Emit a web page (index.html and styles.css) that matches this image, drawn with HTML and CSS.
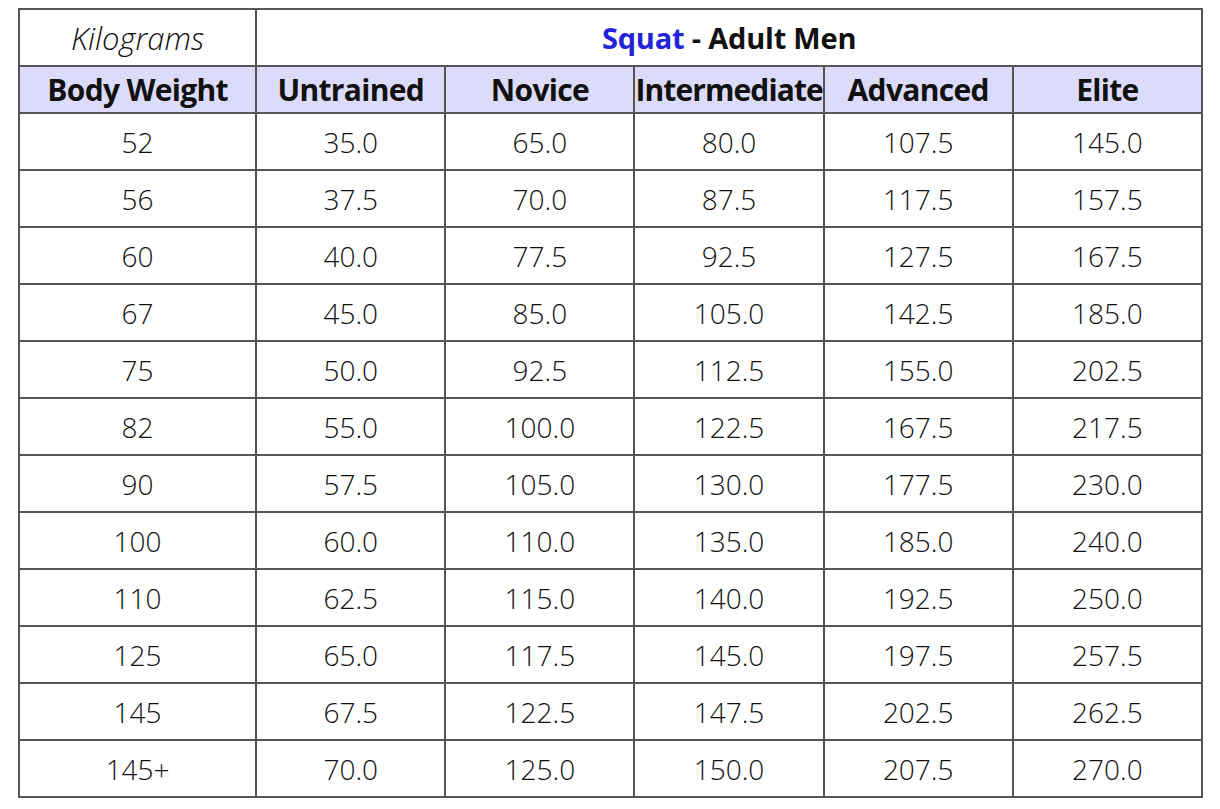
FILE: index.html
```html
<!DOCTYPE html>
<html>
<head>
<meta charset="utf-8">
<link rel="stylesheet" href="styles.css">
</head>
<body>
<div class="page">
<table class="standards">
<colgroup>
<col class="c-first"><col class="c"><col class="c"><col class="c"><col class="c"><col class="c">
</colgroup>
<thead>
<tr class="title-row"><th class="unit">Kilograms</th><th class="title" colspan="5"><span class="lift">Squat</span> - Adult Men</th></tr>
<tr class="head-row"><th>Body Weight</th><th>Untrained</th><th>Novice</th><th class="tight">Intermediate</th><th>Advanced</th><th>Elite</th></tr>
</thead>
<tbody>
<tr><td>52</td><td>35.0</td><td>65.0</td><td>80.0</td><td>107.5</td><td>145.0</td></tr>
<tr><td>56</td><td>37.5</td><td>70.0</td><td>87.5</td><td>117.5</td><td>157.5</td></tr>
<tr><td>60</td><td>40.0</td><td>77.5</td><td>92.5</td><td>127.5</td><td>167.5</td></tr>
<tr><td>67</td><td>45.0</td><td>85.0</td><td>105.0</td><td>142.5</td><td>185.0</td></tr>
<tr><td>75</td><td>50.0</td><td>92.5</td><td>112.5</td><td>155.0</td><td>202.5</td></tr>
<tr><td>82</td><td>55.0</td><td>100.0</td><td>122.5</td><td>167.5</td><td>217.5</td></tr>
<tr><td>90</td><td>57.5</td><td>105.0</td><td>130.0</td><td>177.5</td><td>230.0</td></tr>
<tr><td>100</td><td>60.0</td><td>110.0</td><td>135.0</td><td>185.0</td><td>240.0</td></tr>
<tr><td>110</td><td>62.5</td><td>115.0</td><td>140.0</td><td>192.5</td><td>250.0</td></tr>
<tr><td>125</td><td>65.0</td><td>117.5</td><td>145.0</td><td>197.5</td><td>257.5</td></tr>
<tr><td>145</td><td>67.5</td><td>122.5</td><td>147.5</td><td>202.5</td><td>262.5</td></tr>
<tr><td>145+</td><td>70.0</td><td>125.0</td><td>150.0</td><td>207.5</td><td>270.0</td></tr>
</tbody>
</table>
</div>
</body>
</html>
```
FILE: styles.css
```css
html, body {
  margin: 0;
  padding: 0;
  background: #ffffff;
}
.page {
  padding: 8px 0 0 18px;
}
.standards {
  border-collapse: collapse;
  table-layout: fixed;
  width: 1185px;
  font-family: "Open Sans", "Noto Sans", sans-serif;
  color: #111;
}
.c-first { width: 237px; }
.c { width: 189px; }
.standards th, .standards td {
  border: 2px solid #555;
  text-align: center;
  padding: 0;
  white-space: nowrap;
  overflow: hidden;
}
.title-row th {
  height: 55px;
  font-size: 29px;
}
.unit {
  font-style: italic;
  font-weight: 300;
  font-size: 31px !important;
}
.title {
  font-weight: 700;
  letter-spacing: -0.2px;
}
.lift { color: #2323d8; }
.head-row th {
  height: 45px;
  background: #dcdcfa;
  font-size: 30px;
  font-weight: 700;
  letter-spacing: -0.7px;
}
.head-row th.tight {
  letter-spacing: -0.9px;
}
.standards td {
  height: 55px;
  font-size: 28px;
  font-weight: 300;
}
```
